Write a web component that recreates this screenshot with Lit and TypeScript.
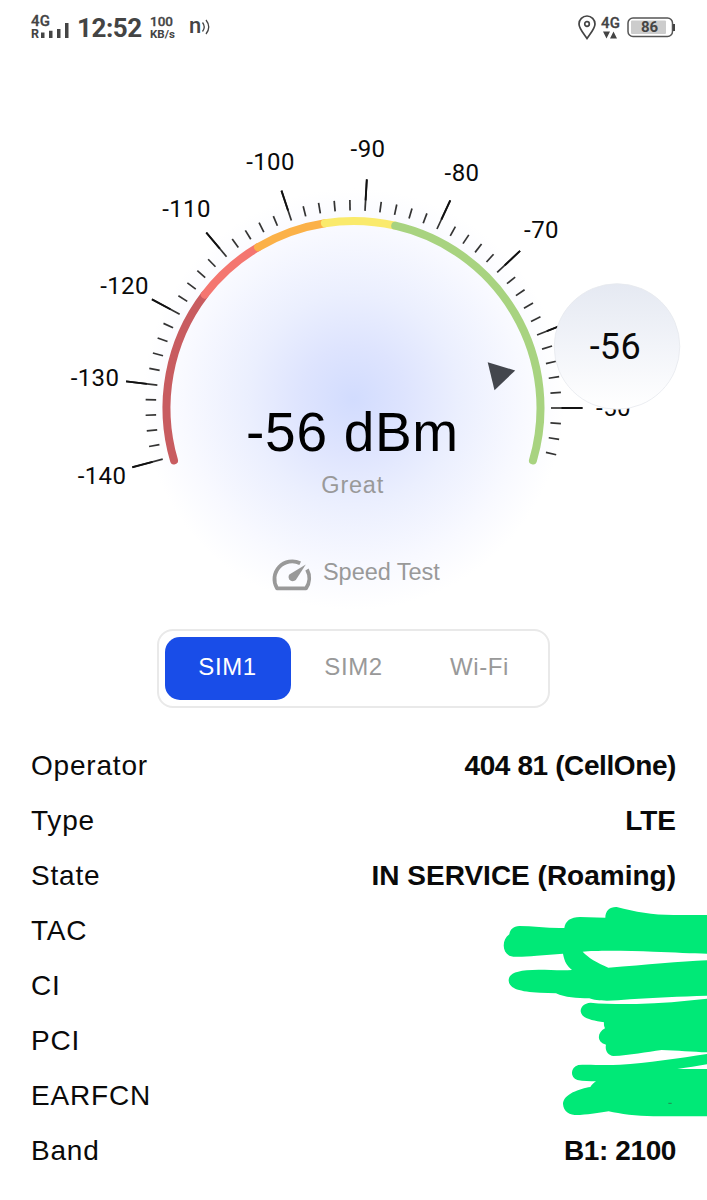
import { LitElement, html, svg, css } from "lit";
import { customElement, property, state } from "lit/decorators.js";
import { classMap } from "lit/directives/class-map.js";

const CX = 353.5;
const CY = 408;

const polar = (deg: number, r: number): [number, number] => {
  const a = (deg * Math.PI) / 180;
  return [CX + r * Math.cos(a), CY - r * Math.sin(a)];
};

const arc = (from: number, to: number, r: number): string => {
  const [x1, y1] = polar(from, r);
  const [x2, y2] = polar(to, r);
  return `M${x1.toFixed(2)} ${y1.toFixed(2)}A${r} ${r} 0 0 1 ${x2.toFixed(2)} ${y2.toFixed(2)}`;
};

@customElement("status-bar")
class StatusBar extends LitElement {
  static styles = css`
    :host {
      display: flex;
      height: 56px;
      box-sizing: border-box;
      padding: 13px 31px 0;
      justify-content: space-between;
      align-items: flex-start;
      font-family: Roboto, sans-serif;
      color: #444;
    }
    .side {
      display: flex;
      align-items: flex-start;
    }
    .stack {
      display: flex;
      flex-direction: column;
      font-weight: 700;
    }
    .signal {
      width: 46px;
      padding-top: 1px;
    }
    .net {
      font-size: 15px;
      line-height: 15px;
      font-weight: 500;
      letter-spacing: 0.2px;
      -webkit-text-stroke: 0.3px #444;
    }
    .roam {
      display: flex;
      align-items: flex-end;
      gap: 2px;
      height: 9px;
      font-size: 12.5px;
      line-height: 9px;
    }
    .bars {
      display: block;
      overflow: visible;
    }
    .time {
      font-size: 26px;
      line-height: 31px;
      font-weight: 700;
      width: 73px;
      letter-spacing: -0.45px;
    }
    .rate {
      width: 39px;
      padding-top: 2px;
      font-size: 13.5px;
      line-height: 13px;
      font-weight: 500;
    }
    .rate .num {
      font-weight: 500;
      -webkit-text-stroke: 0.3px #444;
    }
    .rate .unit {
      font-size: 11.5px;
      line-height: 12px;
      font-weight: 700;
    }
    .nfc {
      display: flex;
      align-items: center;
      gap: 1px;
      font-size: 22px;
      line-height: 22px;
      font-weight: 500;
      padding-top: 2px;
    }
    .nfc svg {
      margin-top: 1px;
    }
    .pin {
      padding: 2px 5px 0 0;
    }
    .data {
      width: 26px;
      padding-top: 3px;
    }
    .battery {
      padding-top: 4px;
    }
    svg {
      display: block;
    }
    .pct {
      font: 700 15px Roboto, sans-serif;
      fill: #444;
    }
  `;
  render() {
    return html`
      <div class="side">
        <div class="stack signal">
          <span class="net">4G</span>
          <span class="roam"
            >R<svg class="bars" width="28" height="10">
              <path
                d="M0 4.500h3.500V10H0zM8 2.700h3.500V10H8zM16 1h3.500v9h-3.500zM24-5h3.500V10h-3.500z"
                fill="#444"
              /></svg
          ></span>
        </div>
        <span class="time">12:52</span>
        <div class="stack rate"><span class="num">100</span><span class="unit">KB/s</span></div>
        <div class="nfc">
          <span>n</span>
          <svg width="9" height="16" viewBox="0 0 9 16" fill="none" stroke="#444" stroke-width="1.3">
            <path d="M0.500 3.500q3.500 4.500 0 9M4 1q5.500 7 0 14" />
          </svg>
        </div>
      </div>
      <div class="side">
        <svg class="pin" width="18" height="25" viewBox="0 0 18 25" fill="none" stroke="#444" stroke-width="1.7">
          <path d="M9 23.500C5.500 18.500 1 13.500 1 9a8 8 0 0 1 16 0C17 13.500 12.500 18.500 9 23.500z" />
          <circle cx="9" cy="9" r="2.300" />
        </svg>
        <div class="stack data">
          <span class="net">4G</span>
          <svg width="17" height="8" fill="#444">
            <path d="M2 0.500h7L5.500 7.500zM9 7.500h7L12.500 0.500z" />
          </svg>
        </div>
        <svg class="battery" width="49" height="21" viewBox="0 0 49 21">
          <rect x="1" y="1" width="44.500" height="18.500" rx="5" fill="#fff" stroke="#555" stroke-width="1.500" />
          <rect x="4" y="3.500" width="35" height="13.500" rx="1" fill="#ccc" />
          <path d="M47 7v7" stroke="#444" stroke-width="2" />
          <text class="pct" x="22.500" y="15.300" text-anchor="middle">86</text>
        </svg>
      </div>
    `;
  }
}

@customElement("signal-gauge")
class SignalGauge extends LitElement {
  @property({ type: Number }) value = -56;

  static styles = css`
    :host {
      display: block;
      height: 574px;
    }
    svg {
      display: block;
    }
    .label {
      font: 400 24px Roboto, sans-serif;
      letter-spacing: 0.4px;
      fill: #0a0a0a;
      text-anchor: middle;
    }
    .bubble {
      font: 400 36px Roboto, sans-serif;
      letter-spacing: 0.3px;
      fill: #0a0a0a;
      text-anchor: middle;
    }
    .value {
      font: 400 55px "Liberation Sans", Arial, sans-serif;
      letter-spacing: 0.7px;
      text-anchor: middle;
    }
    .quality {
      font: 400 23.5px "Liberation Sans", Arial, sans-serif;
      letter-spacing: 0.8px;
      fill: #999;
      text-anchor: middle;
    }
    .speed {
      font: 400 23.5px "Liberation Sans", Arial, sans-serif;
      letter-spacing: -0.05px;
      fill: #999;
    }
  `;

  private bands = [
    { from: 196.3, to: 142.7, color: "#c85c60" },
    { from: 142.7, to: 120.7, color: "#f47670" },
    { from: 120.7, to: 98.8, color: "#fbb148" },
    { from: 98.8, to: 77.1, color: "#faea6c" },
    { from: 77.1, to: -16.3, color: "#a8d380" },
  ];

  private labels = [
    { v: -140, x: 102, y: 476 },
    { v: -130, x: 95, y: 378 },
    { v: -120, x: 124.5, y: 286 },
    { v: -110, x: 186.5, y: 209 },
    { v: -100, x: 270.5, y: 162 },
    { v: -90, x: 368, y: 149 },
    { v: -80, x: 462, y: 173 },
    { v: -70, x: 541.5, y: 230 },
    { v: -50, x: 613.5, y: 408 },
  ];

  render() {
    const ticks = Array.from({ length: 49 }, (_, i) => {
      const deg = 195 - (i * 13) / 3;
      const major = i % 5 === 0;
      const [x1, y1] = polar(deg, 197.5);
      const [x2, y2] = polar(deg, major ? 229 : 208);
      const [xm, ym] = polar(deg, 208);
      return major
        ? svg`
            <path d="M${x1} ${y1}L${x2} ${y2}" stroke="#333" stroke-width="1.700" />
            <path d="M${xm} ${ym}L${x2} ${y2}" stroke="#111" stroke-width="1.900" />`
        : svg`<path d="M${x1} ${y1}L${x2} ${y2}" stroke="#333" stroke-width="1.700" />`;
    });
    return html`
      <svg width="707" height="574" viewBox="0 56 707 574">
        <defs>
          <radialGradient id="glow">
            <stop offset="0" stop-color="#d2dcfe" />
            <stop offset="0.25" stop-color="#dee4fe" />
            <stop offset="0.5" stop-color="#ebeffe" />
            <stop offset="0.8" stop-color="#f8f9ff" />
            <stop offset="1" stop-color="#fff" />
          </radialGradient>
          <linearGradient id="bubble" x1="0" y1="0" x2="0" y2="1">
            <stop offset="0" stop-color="#e5e9f2" />
            <stop offset="0.5" stop-color="#f2f4f9" />
            <stop offset="1" stop-color="#fff" />
          </linearGradient>
        </defs>
        <circle cx="353.500" cy="399" r="211" fill="url(#glow)" />
        ${ticks}
        ${this.bands.map(
          (b) => svg`<path d=${arc(b.from, b.to, 187)} fill="none" stroke=${b.color} stroke-width="8" stroke-linecap="round" />`
        )}
        ${this.labels.map((l) => svg`<text class="label" x=${l.x} y=${l.y + 8.2}>${l.v}</text>`)}
        <path d="M487.700 362.300L515.200 370.500L494.500 390.200z" fill="#43464d" />
        <circle cx="617" cy="346.500" r="62.800" fill="url(#bubble)" stroke="#e6e8ed" stroke-width="0.800" />
        <text class="bubble" x="615.300" y="358.900">${this.value}</text>
        <text class="value" x="352.500" y="451.300">${this.value} dBm</text>
        <text class="quality" x="352.700" y="492.700">Great</text>
        <path
          d="M300.200 563.200A17.800 17.800 0 0 0 277 588.300H306A17.800 17.800 0 0 0 307 569.500"
          fill="none"
          stroke="#999"
          stroke-width="3.800"
          stroke-linejoin="round"
        />
        <path d="M305.800 564.500L296.300 579.300a4 4 0 1 1-7-4.800z" fill="#999" />
        <text class="speed" x="323" y="580.300">Speed Test</text>
      </svg>
    `;
  }
}

@customElement("app-root")
class AppRoot extends LitElement {
  @state() private active = "SIM1";

  static styles = css`
    :host {
      display: block;
      width: 707px;
      height: 1200px;
      overflow: hidden;
      position: relative;
      background: #fff;
      font-family: "Liberation Sans", Arial, sans-serif;
      color: #0a0a0a;
    }
    .tabs {
      display: grid;
      grid-template-columns: repeat(3, 126px);
      width: 393px;
      height: 79px;
      box-sizing: border-box;
      margin: -1px auto 0;
      padding: 6px;
      border: 2px solid #e9e9e9;
      border-radius: 16px;
      background: #fff;
    }
    .tab {
      height: 63px;
      border: 0;
      padding: 0 1px 3px 0;
      border-radius: 15px;
      background: none;
      font: 400 24px "Liberation Sans", Arial, sans-serif;
      letter-spacing: 0.6px;
      color: #999;
    }
    .tab.on {
      background: #194de8;
      color: #fff;
    }
    .list {
      margin: 30px 31px 0;
    }
    .row {
      display: flex;
      justify-content: space-between;
      align-items: center;
      height: 55px;
      font-size: 28px;
    }
    .key {
      letter-spacing: 0.8px;
    }
    .val {
      font-weight: 700;
    }
    .val.tight {
      letter-spacing: -0.4px;
    }
    .scribble {
      position: absolute;
      left: 480px;
      top: 890px;
    }
  `;

  private rows = [
    { key: "Operator", val: "404 81 (CellOne)", tight: true },
    { key: "Type", val: "LTE", tight: false },
    { key: "State", val: "IN SERVICE (Roaming)", tight: false },
    { key: "TAC", val: "", tight: false },
    { key: "CI", val: "", tight: false },
    { key: "PCI", val: "", tight: false },
    { key: "EARFCN", val: "", tight: false },
    { key: "Band", val: "B1: 2100", tight: true },
  ];

  render() {
    return html`
      <status-bar></status-bar>
      <signal-gauge .value=${-56}></signal-gauge>
      <div class="tabs">
        ${["SIM1", "SIM2", "Wi-Fi"].map(
          (t) => html`<button class=${classMap({ tab: true, on: t === this.active })} @click=${() => (this.active = t)}>${t}</button>`
        )}
      </div>
      <div class="list">
        ${this.rows.map(
          (r) => html`<div class="row">
            <span class="key">${r.key}</span><span class=${classMap({ val: true, tight: r.tight })}>${r.val}</span>
          </div>`
        )}
      </div>
      <svg class="scribble" width="227" height="240" viewBox="0 0 681 720" fill="#00e977">
        <path
          d="M681 75H590C520 76 470 66 410 51C390 50 376 62 376 83L300 81C272 82 256 92 253 114C210 116 160 108 118 108C100 109 90 118 88 133C65 150 66 185 88 197C105 203 130 200 170 197L249 191C253 215 262 228 276 240C230 243 180 236 140 241C100 245 86 255 86 272C88 296 120 305 180 308L228 310C255 323 290 325 328 325C350 335 400 333 450 328C520 322 600 320 681 317V211C600 214 500 225 385 233C350 218 325 203 308 185C350 180 450 182 520 185C580 187 640 190 681 191Z"
        />
        <path
          d="M681 326C610 334 540 340 470 342C420 343 370 342 332 338C312 340 302 350 302 364C304 385 335 391 372 397C371 405 373 410 375 415C350 428 350 458 378 464C374 482 384 496 400 498C450 496 500 486 545 480C590 481 640 486 681 487Z"
        />
        <path
          d="M681 492C600 504 500 520 420 524C370 527 330 523 295 525C270 532 270 563 292 570C310 574 330 573 348 574C341 579 334 585 331 591C300 596 250 612 249 642C251 668 272 677 300 675C335 673 360 667 386 664C420 672 470 678 520 679H681V537H592C625 533 650 528 681 523Z"
        />
        <path d="M565 640h10" stroke="#2f5a3c" stroke-width="2" />
      </svg>
    `;
  }
}
